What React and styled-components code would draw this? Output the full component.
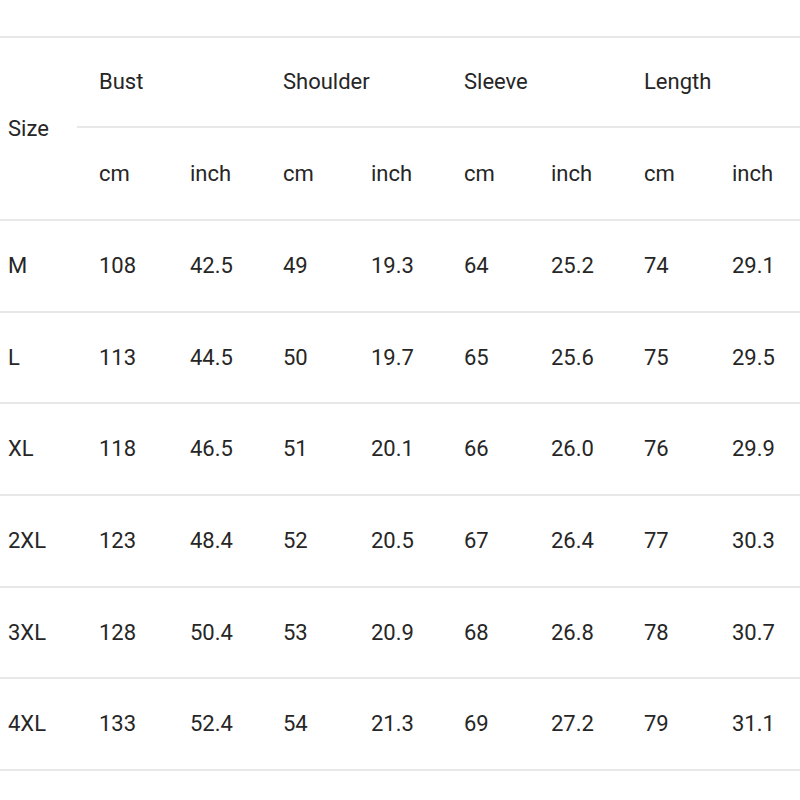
import React from "react";
import styled, { createGlobalStyle } from "styled-components";

const Global = createGlobalStyle`
  html, body { margin: 0; padding: 0; background: #fff; }
  body { font-family: Roboto, "Liberation Sans", Arial, sans-serif; color: #262626; }
`;

const COLS = "77px 91px 93px 88px 93px 87px 93px 88px 90px";

const Table = styled.div`
  margin-top: 36px;
  width: 800px;
  border-top: 2px solid #e8e8e8;
  font-size: 22px;
  line-height: 1;
`;

const Header = styled.div`
  display: grid;
  grid-template-columns: ${COLS};
  grid-template-rows: 90px 91px;
  border-bottom: 2px solid #e8e8e8;
`;

const SizeHead = styled.div`
  grid-row: 1 / 3;
  grid-column: 1;
  display: flex;
  align-items: center;
  padding-left: 8px;
`;

const GroupHead = styled.div`
  grid-row: 1;
  grid-column: span 2;
  display: flex;
  align-items: center;
  padding-left: 22px;
  border-bottom: 2px solid #e8e8e8;
`;

const SubHead = styled.div`
  grid-row: 2;
  display: flex;
  align-items: center;
  padding-left: 22px;
`;

const Row = styled.div`
  display: grid;
  grid-template-columns: ${COLS};
  height: 89.7px;
  border-bottom: 2px solid #e8e8e8;
`;

const Cell = styled.div`
  display: flex;
  align-items: center;
  padding-left: ${(p) => (p.$first ? "8px" : "22px")};
`;

const groups = ["Bust", "Shoulder", "Sleeve", "Length"];
const rows = [
  ["M", "108", "42.5", "49", "19.3", "64", "25.2", "74", "29.1"],
  ["L", "113", "44.5", "50", "19.7", "65", "25.6", "75", "29.5"],
  ["XL", "118", "46.5", "51", "20.1", "66", "26.0", "76", "29.9"],
  ["2XL", "123", "48.4", "52", "20.5", "67", "26.4", "77", "30.3"],
  ["3XL", "128", "50.4", "53", "20.9", "68", "26.8", "78", "30.7"],
  ["4XL", "133", "52.4", "54", "21.3", "69", "27.2", "79", "31.1"],
];

export default function App() {
  return (
    <>
      <Global />
      <Table>
        <Header>
          <SizeHead>Size</SizeHead>
          {groups.map((g) => (
            <GroupHead key={g}>{g}</GroupHead>
          ))}
          {groups.flatMap((g) => [
            <SubHead key={g + "cm"}>cm</SubHead>,
            <SubHead key={g + "in"}>inch</SubHead>,
          ])}
        </Header>
        {rows.map((r) => (
          <Row key={r[0]}>
            {r.map((v, i) => (
              <Cell key={i} $first={i === 0}>
                {v}
              </Cell>
            ))}
          </Row>
        ))}
      </Table>
    </>
  );
}
